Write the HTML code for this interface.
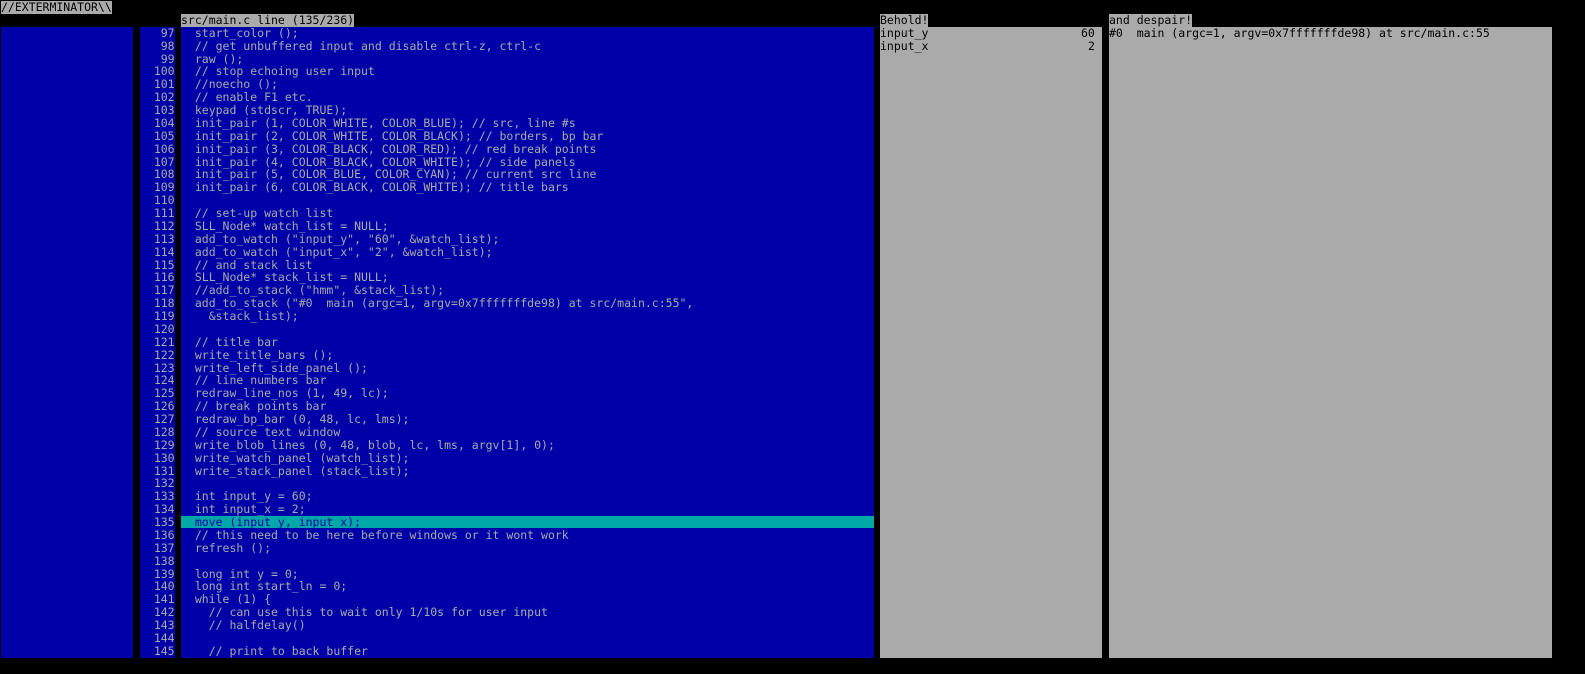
<!DOCTYPE html>
<html><head><style>
body{margin:0;background:#000;width:1585px;height:674px;overflow:hidden;position:relative;font-family:"DejaVu Sans Mono","Liberation Mono",monospace;font-size:11.5px;}
pre{margin:0;font:inherit;line-height:12.88px;position:absolute;white-space:pre;}
.p{position:absolute;}
.blue{background:#0000a8;color:#aaaaaa;}
.gray{background:#aaaaaa;color:#000;}
</style></head><body>
<pre class="gray" style="left:1px;top:1px;">//EXTERMINATOR\\</pre>
<pre class="gray" style="left:181px;top:13.88px;">src/main.c line (135/236)</pre>
<pre class="gray" style="left:880px;top:13.88px;">Behold!</pre>
<pre class="gray" style="left:1109px;top:13.88px;">and despair!</pre>
<div class="p blue" style="left:1px;top:26.8px;width:132px;height:631px"></div>
<div class="p blue" style="left:140px;top:26.8px;width:34.6px;height:631px"></div>
<div class="p blue" style="left:181px;top:26.8px;width:693px;height:631px"></div>
<div class="p gray" style="left:880px;top:26.8px;width:222px;height:631px"></div>
<div class="p gray" style="left:1109px;top:26.8px;width:443px;height:631px"></div>
<div class="p" style="left:181px;top:515.5px;width:693px;height:12.88px;background:#00a8a8"></div>
<pre style="left:140px;top:26.8px;color:#aaa;text-align:right;width:34.6px;">97
98
99
100
101
102
103
104
105
106
107
108
109
110
111
112
113
114
115
116
117
118
119
120
121
122
123
124
125
126
127
128
129
130
131
132
133
134
135
136
137
138
139
140
141
142
143
144
145</pre>
<pre style="left:181px;top:26.8px;color:#aaa;">  start_color ();
  // get unbuffered input and disable ctrl-z, ctrl-c
  raw ();
  // stop echoing user input
  //noecho ();
  // enable F1 etc.
  keypad (stdscr, TRUE);
  init_pair (1, COLOR_WHITE, COLOR_BLUE); // src, line #s
  init_pair (2, COLOR_WHITE, COLOR_BLACK); // borders, bp bar
  init_pair (3, COLOR_BLACK, COLOR_RED); // red break points
  init_pair (4, COLOR_BLACK, COLOR_WHITE); // side panels
  init_pair (5, COLOR_BLUE, COLOR_CYAN); // current src line
  init_pair (6, COLOR_BLACK, COLOR_WHITE); // title bars

  // set-up watch list
  SLL_Node* watch_list = NULL;
  add_to_watch ("input_y", "60", &amp;watch_list);
  add_to_watch ("input_x", "2", &amp;watch_list);
  // and stack list
  SLL_Node* stack_list = NULL;
  //add_to_stack ("hmm", &amp;stack_list);
  add_to_stack ("#0  main (argc=1, argv=0x7fffffffde98) at src/main.c:55",
    &amp;stack_list);

  // title bar
  write_title_bars ();
  write_left_side_panel ();
  // line numbers bar
  redraw_line_nos (1, 49, lc);
  // break points bar
  redraw_bp_bar (0, 48, lc, lms);
  // source text window
  write_blob_lines (0, 48, blob, lc, lms, argv[1], 0);
  write_watch_panel (watch_list);
  write_stack_panel (stack_list);

  int input_y = 60;
  int input_x = 2;
<span style="color:#0000a8">  move (input_y, input_x);</span>
  // this need to be here before windows or it wont work
  refresh ();

  long int y = 0;
  long int start_ln = 0;
  while (1) {
    // can use this to wait only 1/10s for user input
    // halfdelay()

    // print to back buffer</pre>
<pre style="left:880px;top:26.8px;color:#000;">input_y</pre>
<pre style="left:880px;top:39.68px;color:#000;">input_x</pre>
<pre style="left:1081px;top:26.8px;color:#000;">60</pre>
<pre style="left:1088px;top:39.68px;color:#000;">2</pre>
<pre style="left:1109px;top:26.8px;color:#000;">#0  main (argc=1, argv=0x7fffffffde98) at src/main.c:55</pre>
</body></html>
